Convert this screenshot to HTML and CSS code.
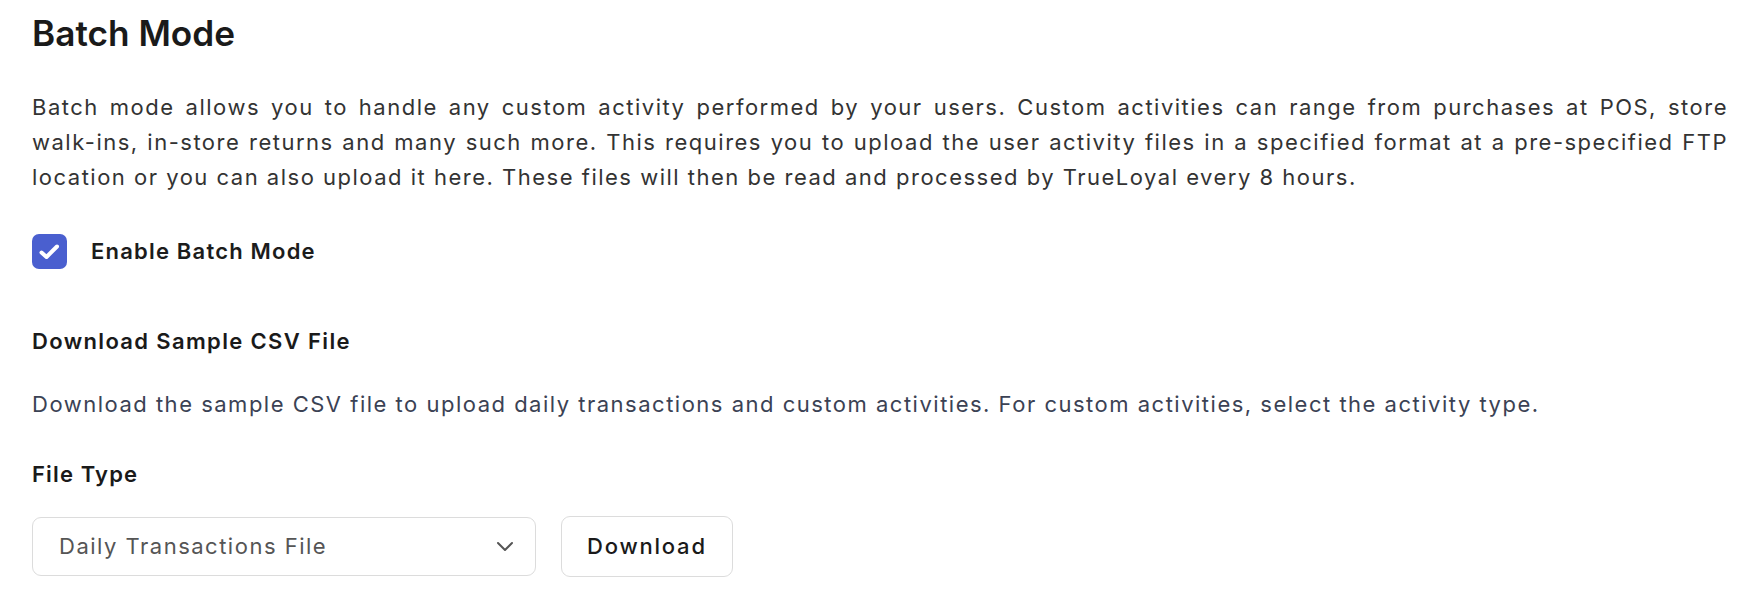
FILE: index.html
```html
<!DOCTYPE html>
<html lang="en">
<head>
<meta charset="utf-8">
<title>Batch Mode</title>
<link rel="stylesheet" href="styles.css">
</head>
<body>
<main class="page">
  <h1 class="title">Batch Mode</h1>
  <p class="intro">Batch mode allows you to handle any custom activity performed by your users. Custom activities can range from purchases at POS, store walk-ins, in-store returns and many such more. This requires you to upload the user activity files in a specified format at a pre-specified FTP location or you can also upload it here. These files will then be read and processed by TrueLoyal every 8 hours.</p>
  <label class="check-row">
    <span class="checkbox">
      <svg viewBox="0 0 35 35" width="35" height="35" aria-hidden="true"><path d="M9.5 18.5 L14.5 23 L25 12.5" fill="none" stroke="#ffffff" stroke-width="4" stroke-linecap="round" stroke-linejoin="round"/></svg>
    </span>
    <span class="check-label">Enable Batch Mode</span>
  </label>
  <h2 class="section-title">Download Sample CSV File</h2>
  <p class="section-desc">Download the sample CSV file to upload daily transactions and custom activities. For custom activities, select the activity type.</p>
  <div class="field-label">File Type</div>
  <div class="controls">
    <div class="select">
      <span class="select-value">Daily Transactions File</span>
      <svg class="chevron" viewBox="0 0 18 11" width="18" height="11" aria-hidden="true"><path d="M2 2 L9 9 L16 2" fill="none" stroke="#555555" stroke-width="2" stroke-linecap="round" stroke-linejoin="round"/></svg>
    </div>
    <button class="btn" type="button">Download</button>
  </div>
</main>
</body>
</html>
```

FILE: styles.css
```css
* { box-sizing: border-box; }
html, body { margin: 0; padding: 0; background: #ffffff; }
body {
  font-family: Inter, "Noto Sans", "Liberation Sans", sans-serif;
  color: #1c1c1c;
}
.page {
  padding: 12px 32px 0 32px;
}
.title {
  margin: 0;
  font-size: 35.2px;
  line-height: 42px;
  font-weight: 600;
  color: #1a1a1a;
}
.intro {
  margin: 36px 0 0 0;
  font-size: 22px;
  line-height: 35.2px;
  letter-spacing: 1.5px;
  color: #333333;
  text-align: justify;
}
.check-row {
  display: flex;
  align-items: center;
  gap: 24px;
  margin-top: 38px;
}
.checkbox {
  width: 35px;
  height: 35px;
  border-radius: 7px;
  background: #4a5fcf;
  display: block;
}
.checkbox svg { display: block; }
.check-label {
  font-size: 22px;
  font-weight: 600;
  letter-spacing: 1.2px;
  color: #1c1c1c;
}
.section-title {
  margin: 58px 0 0 0;
  font-size: 22px;
  line-height: 28px;
  font-weight: 600;
  letter-spacing: 1.35px;
  color: #1a1a1a;
}
.section-desc {
  margin: 32px 0 0 0;
  font-size: 22px;
  line-height: 35.2px;
  letter-spacing: 1.5px;
  color: #3b4254;
}
.field-label {
  margin-top: 38px;
  font-size: 22px;
  line-height: 28px;
  font-weight: 600;
  letter-spacing: 1.15px;
  color: #1a1a1a;
}
.controls {
  display: flex;
  align-items: center;
  gap: 25px;
  margin-top: 28px;
}
.select {
  width: 504px;
  height: 59px;
  border: 1px solid #dcdcdc;
  border-radius: 9px;
  display: flex;
  align-items: center;
  justify-content: space-between;
  padding: 0 21px 0 26px;
  background: #ffffff;
}
.select-value {
  font-size: 22px;
  letter-spacing: 1.5px;
  color: #555555;
}
.chevron { display: block; }
.btn {
  height: 61px;
  padding: 0 25px;
  border: 1px solid #dcdcdc;
  border-radius: 9px;
  background: #ffffff;
  font-family: inherit;
  font-size: 22px;
  font-weight: 500;
  letter-spacing: 1.8px;
  color: #1a1a1a;
}
```
